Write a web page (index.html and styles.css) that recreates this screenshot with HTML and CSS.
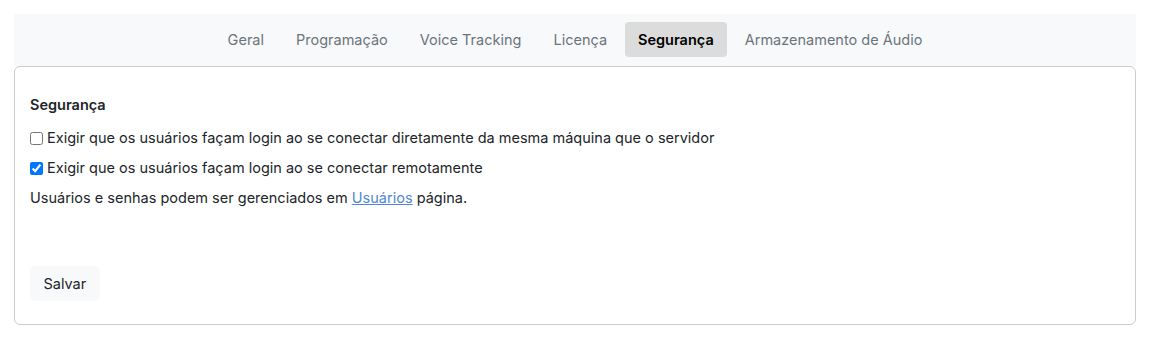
FILE: index.html
```html
<!DOCTYPE html>
<html lang="pt-BR">
<head>
  <meta charset="UTF-8">
  <title>Configurações</title>
  <link rel="stylesheet" href="styles.css">
</head>
<body>
  <nav class="tabs">
    <a class="tab" href="#">Geral</a>
    <a class="tab" href="#">Programação</a>
    <a class="tab" href="#">Voice Tracking</a>
    <a class="tab" href="#">Licença</a>
    <a class="tab active" href="#">Segurança</a>
    <a class="tab" href="#">Armazenamento de Áudio</a>
  </nav>

  <div class="card">
    <h4>Segurança</h4>
    <div class="check-row">
      <input type="checkbox" id="loginLocal">
      <label for="loginLocal">Exigir que os usuários façam login ao se conectar diretamente da mesma máquina que o servidor</label>
    </div>
    <div class="check-row">
      <input type="checkbox" id="loginRemoto" checked>
      <label for="loginRemoto">Exigir que os usuários façam login ao se conectar remotamente</label>
    </div>
    <p class="info">Usuários e senhas podem ser gerenciados em <a href="#">Usuários</a> página.</p>

    <button type="button" class="btn-salvar">Salvar</button>
  </div>
</body>
</html>
```

FILE: styles.css
```css
* {
  box-sizing: border-box;
}

body {
  font-family: Inter, 'Noto Sans', sans-serif;
  font-size: 14.5px;
  color: #212529;
  background-color: #fff;
  margin: 0;
  padding: 14px;
}

.tabs {
  display: flex;
  justify-content: center;
  background-color: #f8f9fa;
  padding: 8px 0 9px;
}

.tab {
  display: block;
  padding: 8px 14px;
  margin: 0 2px;
  line-height: 19px;
  color: #6c757d;
  text-decoration: none;
  border-radius: 4px;
}

.tab.active {
  padding: 8px 13px;
  background-color: #dcdcdc;
  color: #000;
  font-weight: 600;
}

.card {
  border: 1px solid #ccc;
  border-radius: 6px;
  padding: 28px 15px 23px;
}

h4 {
  font-size: 14.5px;
  font-weight: 600;
  line-height: 20px;
  margin: 0 0 13px;
}

.check-row {
  display: flex;
  align-items: center;
  line-height: 20px;
  margin-bottom: 10px;
}

.check-row input {
  width: 13px;
  height: 13px;
  margin: 0 4px 0 0;
}

.info {
  line-height: 20px;
  margin: 0;
}

.info a {
  color: #4e88d6;
}

.btn-salvar {
  margin-top: 58px;
  padding: 0 13.5px;
  height: 35px;
  font-family: inherit;
  font-size: 14.5px;
  color: #212529;
  background-color: #f8f9fa;
  border: none;
  border-radius: 5px;
}
```
